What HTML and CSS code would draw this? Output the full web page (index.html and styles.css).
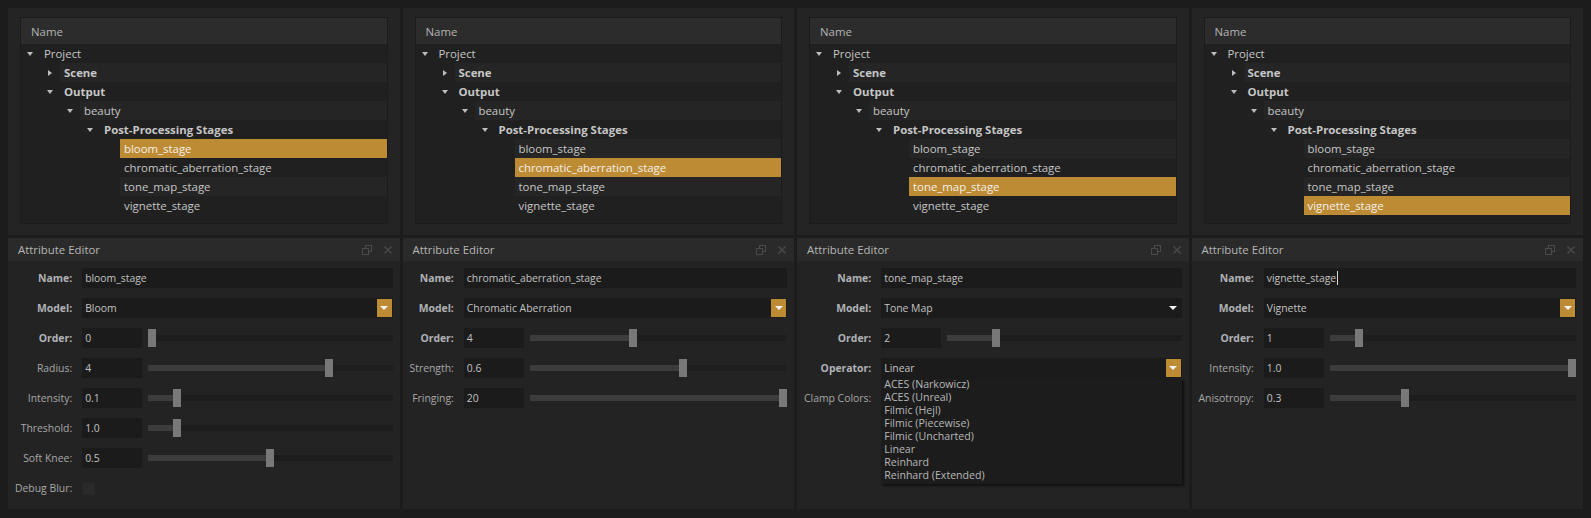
FILE: index.html
```html
<!DOCTYPE html>
<html>
<head>
<meta charset="utf-8">
<link rel="stylesheet" href="styles.css">
</head>
<body>
<div class="app">

  <!-- Column 1 -->
  <div class="col">
    <section class="outliner">
      <div class="tree">
        <div class="tree-head">Name</div>
        <div class="row"><span class="tw l0"><i class="arr down"></i></span><span class="item">Project</span></div>
        <div class="row alt"><span class="tw l1"><i class="arr right"></i></span><span class="item b">Scene</span></div>
        <div class="row"><span class="tw l1"><i class="arr down"></i></span><span class="item b">Output</span></div>
        <div class="row alt"><span class="tw l2"><i class="arr down"></i></span><span class="item">beauty</span></div>
        <div class="row"><span class="tw l3"><i class="arr down"></i></span><span class="item b">Post-Processing Stages</span></div>
        <div class="row"><span class="tw l4"></span><span class="item sel">bloom_stage</span></div>
        <div class="row"><span class="tw l4"></span><span class="item">chromatic_aberration_stage</span></div>
        <div class="row alt"><span class="tw l4"></span><span class="item">tone_map_stage</span></div>
        <div class="row"><span class="tw l4"></span><span class="item">vignette_stage</span></div>
      </div>
    </section>
    <section class="editor">
      <header class="titlebar"><span>Attribute Editor</span><span class="tb-icons"><svg width="10" height="10" viewBox="0 0 10 10"><rect x="3.5" y="0.5" width="6" height="6" fill="none" stroke="#4a4a4a"/><rect x="0.5" y="3.5" width="6" height="6" fill="#2a2a2a" stroke="#4a4a4a"/></svg><svg width="8" height="8" viewBox="0 0 8 8"><path d="M0.5 0.5L7.5 7.5M7.5 0.5L0.5 7.5" stroke="#4a4a4a" stroke-width="1.4"/></svg></span></header>
      <div class="form">
        <span class="lbl b">Name:</span><div class="field">bloom_stage</div>
        <span class="lbl b">Model:</span><div class="field combo">Bloom<span class="dd gold"><i class="tri"></i></span></div>
        <span class="lbl b">Order:</span><div class="spinrow"><div class="field spin">0</div><div class="slider" style="--v:0"><span class="fill"></span><span class="handle"></span></div></div>
        <span class="lbl">Radius:</span><div class="spinrow"><div class="field spin">4</div><div class="slider" style="--v:0.75"><span class="fill"></span><span class="handle"></span></div></div>
        <span class="lbl">Intensity:</span><div class="spinrow"><div class="field spin">0.1</div><div class="slider" style="--v:0.105"><span class="fill"></span><span class="handle"></span></div></div>
        <span class="lbl">Threshold:</span><div class="spinrow"><div class="field spin">1.0</div><div class="slider" style="--v:0.105"><span class="fill"></span><span class="handle"></span></div></div>
        <span class="lbl">Soft Knee:</span><div class="spinrow"><div class="field spin">0.5</div><div class="slider" style="--v:0.5"><span class="fill"></span><span class="handle"></span></div></div>
        <span class="lbl">Debug Blur:</span><div class="checkcell"><span class="check"></span></div>
      </div>
    </section>
  </div>

  <!-- Column 2 -->
  <div class="col">
    <section class="outliner">
      <div class="tree">
        <div class="tree-head">Name</div>
        <div class="row"><span class="tw l0"><i class="arr down"></i></span><span class="item">Project</span></div>
        <div class="row alt"><span class="tw l1"><i class="arr right"></i></span><span class="item b">Scene</span></div>
        <div class="row"><span class="tw l1"><i class="arr down"></i></span><span class="item b">Output</span></div>
        <div class="row alt"><span class="tw l2"><i class="arr down"></i></span><span class="item">beauty</span></div>
        <div class="row"><span class="tw l3"><i class="arr down"></i></span><span class="item b">Post-Processing Stages</span></div>
        <div class="row alt"><span class="tw l4"></span><span class="item">bloom_stage</span></div>
        <div class="row"><span class="tw l4"></span><span class="item sel">chromatic_aberration_stage</span></div>
        <div class="row alt"><span class="tw l4"></span><span class="item">tone_map_stage</span></div>
        <div class="row"><span class="tw l4"></span><span class="item">vignette_stage</span></div>
      </div>
    </section>
    <section class="editor">
      <header class="titlebar"><span>Attribute Editor</span><span class="tb-icons"><svg width="10" height="10" viewBox="0 0 10 10"><rect x="3.5" y="0.5" width="6" height="6" fill="none" stroke="#4a4a4a"/><rect x="0.5" y="3.5" width="6" height="6" fill="#2a2a2a" stroke="#4a4a4a"/></svg><svg width="8" height="8" viewBox="0 0 8 8"><path d="M0.5 0.5L7.5 7.5M7.5 0.5L0.5 7.5" stroke="#4a4a4a" stroke-width="1.4"/></svg></span></header>
      <div class="form">
        <span class="lbl b">Name:</span><div class="field">chromatic_aberration_stage</div>
        <span class="lbl b">Model:</span><div class="field combo">Chromatic Aberration<span class="dd gold"><i class="tri"></i></span></div>
        <span class="lbl b">Order:</span><div class="spinrow"><div class="field spin">4</div><div class="slider" style="--v:0.4"><span class="fill"></span><span class="handle"></span></div></div>
        <span class="lbl">Strength:</span><div class="spinrow"><div class="field spin">0.6</div><div class="slider" style="--v:0.6"><span class="fill"></span><span class="handle"></span></div></div>
        <span class="lbl">Fringing:</span><div class="spinrow"><div class="field spin">20</div><div class="slider" style="--v:1"><span class="fill"></span><span class="handle"></span></div></div>
      </div>
    </section>
  </div>

  <!-- Column 3 -->
  <div class="col">
    <section class="outliner">
      <div class="tree">
        <div class="tree-head">Name</div>
        <div class="row"><span class="tw l0"><i class="arr down"></i></span><span class="item">Project</span></div>
        <div class="row alt"><span class="tw l1"><i class="arr right"></i></span><span class="item b">Scene</span></div>
        <div class="row"><span class="tw l1"><i class="arr down"></i></span><span class="item b">Output</span></div>
        <div class="row alt"><span class="tw l2"><i class="arr down"></i></span><span class="item">beauty</span></div>
        <div class="row"><span class="tw l3"><i class="arr down"></i></span><span class="item b">Post-Processing Stages</span></div>
        <div class="row alt"><span class="tw l4"></span><span class="item">bloom_stage</span></div>
        <div class="row"><span class="tw l4"></span><span class="item">chromatic_aberration_stage</span></div>
        <div class="row"><span class="tw l4"></span><span class="item sel">tone_map_stage</span></div>
        <div class="row"><span class="tw l4"></span><span class="item">vignette_stage</span></div>
      </div>
    </section>
    <section class="editor">
      <header class="titlebar"><span>Attribute Editor</span><span class="tb-icons"><svg width="10" height="10" viewBox="0 0 10 10"><rect x="3.5" y="0.5" width="6" height="6" fill="none" stroke="#4a4a4a"/><rect x="0.5" y="3.5" width="6" height="6" fill="#2a2a2a" stroke="#4a4a4a"/></svg><svg width="8" height="8" viewBox="0 0 8 8"><path d="M0.5 0.5L7.5 7.5M7.5 0.5L0.5 7.5" stroke="#4a4a4a" stroke-width="1.4"/></svg></span></header>
      <div class="form">
        <span class="lbl b">Name:</span><div class="field">tone_map_stage</div>
        <span class="lbl b">Model:</span><div class="field combo">Tone Map<span class="dd"><i class="tri"></i></span></div>
        <span class="lbl b">Order:</span><div class="spinrow"><div class="field spin">2</div><div class="slider" style="--v:0.2"><span class="fill"></span><span class="handle"></span></div></div>
        <span class="lbl b">Operator:</span><div class="field combo open">Linear<span class="dd gold"><i class="tri"></i></span>
          <ul class="popup">
            <li>ACES (Narkowicz)</li>
            <li>ACES (Unreal)</li>
            <li>Filmic (Hejl)</li>
            <li>Filmic (Piecewise)</li>
            <li>Filmic (Uncharted)</li>
            <li>Linear</li>
            <li>Reinhard</li>
            <li>Reinhard (Extended)</li>
          </ul>
        </div>
        <span class="lbl">Clamp Colors:</span><div class="checkcell"><span class="check"></span></div>
      </div>
    </section>
  </div>

  <!-- Column 4 -->
  <div class="col">
    <section class="outliner">
      <div class="tree">
        <div class="tree-head">Name</div>
        <div class="row"><span class="tw l0"><i class="arr down"></i></span><span class="item">Project</span></div>
        <div class="row alt"><span class="tw l1"><i class="arr right"></i></span><span class="item b">Scene</span></div>
        <div class="row"><span class="tw l1"><i class="arr down"></i></span><span class="item b">Output</span></div>
        <div class="row alt"><span class="tw l2"><i class="arr down"></i></span><span class="item">beauty</span></div>
        <div class="row"><span class="tw l3"><i class="arr down"></i></span><span class="item b">Post-Processing Stages</span></div>
        <div class="row alt"><span class="tw l4"></span><span class="item">bloom_stage</span></div>
        <div class="row"><span class="tw l4"></span><span class="item">chromatic_aberration_stage</span></div>
        <div class="row alt"><span class="tw l4"></span><span class="item">tone_map_stage</span></div>
        <div class="row"><span class="tw l4"></span><span class="item sel">vignette_stage</span></div>
      </div>
    </section>
    <section class="editor">
      <header class="titlebar"><span>Attribute Editor</span><span class="tb-icons"><svg width="10" height="10" viewBox="0 0 10 10"><rect x="3.5" y="0.5" width="6" height="6" fill="none" stroke="#4a4a4a"/><rect x="0.5" y="3.5" width="6" height="6" fill="#2a2a2a" stroke="#4a4a4a"/></svg><svg width="8" height="8" viewBox="0 0 8 8"><path d="M0.5 0.5L7.5 7.5M7.5 0.5L0.5 7.5" stroke="#4a4a4a" stroke-width="1.4"/></svg></span></header>
      <div class="form">
        <span class="lbl b">Name:</span><div class="field">vignette_stage<span class="caret"></span></div>
        <span class="lbl b">Model:</span><div class="field combo">Vignette<span class="dd gold"><i class="tri"></i></span></div>
        <span class="lbl b">Order:</span><div class="spinrow"><div class="field spin">1</div><div class="slider" style="--v:0.105"><span class="fill"></span><span class="handle"></span></div></div>
        <span class="lbl">Intensity:</span><div class="spinrow"><div class="field spin">1.0</div><div class="slider" style="--v:1"><span class="fill"></span><span class="handle"></span></div></div>
        <span class="lbl">Anisotropy:</span><div class="spinrow"><div class="field spin">0.3</div><div class="slider" style="--v:0.3"><span class="fill"></span><span class="handle"></span></div></div>
      </div>
    </section>
  </div>

</div>
</body>
</html>
```

FILE: styles.css
```css
* { box-sizing: border-box; }

html, body {
  margin: 0;
  padding: 0;
  background: #1c1c1c;
  font-family: "Open Sans", "Noto Sans", sans-serif;
}

.app {
  display: grid;
  grid-template-columns: repeat(4, 1fr);
  column-gap: 3px;
  padding: 8px 8px 9px 8px;
  height: 518px;
  width: 1591px;
}

.col {
  display: flex;
  flex-direction: column;
  gap: 3px;
  min-width: 0;
}

/* ---------- Outliner ---------- */
.outliner {
  height: 227px;
  background: #242424;
  padding: 9px 12px 0 12px;
}

.tree {
  height: 207px;
  background: #202020;
  border: 1px solid #1b1b1b;
  font-size: 11.4px;
  color: #c6c6c6;
}

.tree-head {
  height: 26px;
  background: #2c2c2c;
  display: flex;
  align-items: center;
  padding-left: 10px;
  color: #b4b4b4;
}

.row {
  display: flex;
  height: 19px;
}

.tw {
  flex: none;
  display: flex;
  align-items: center;
  justify-content: center;
  width: 20px;
}
.tw.l0 { margin-left: -1px; }
.tw.l1 { margin-left: 19px; }
.tw.l2 { margin-left: 39px; }
.tw.l3 { margin-left: 59px; }
.tw.l4 { margin-left: 79px; }

.arr {
  display: block;
  width: 0;
  height: 0;
}
.arr.down {
  border-left: 3.5px solid transparent;
  border-right: 3.5px solid transparent;
  border-top: 4px solid #bdbdbd;
}
.arr.right {
  border-top: 3.5px solid transparent;
  border-bottom: 3.5px solid transparent;
  border-left: 4px solid #bdbdbd;
}

.item {
  flex: 1;
  display: flex;
  align-items: center;
  padding-left: 4px;
  white-space: nowrap;
}
.row.alt .item { background: #252525; }
.item.b { font-weight: bold; }
.row .item.sel {
  background: #bd8b34;
  color: #f4f1ea;
}

/* ---------- Attribute editor ---------- */
.editor {
  flex: 1;
  background: #232323;
  display: flex;
  flex-direction: column;
}

.titlebar {
  height: 23px;
  flex: none;
  background: #2a2a2a;
  display: flex;
  align-items: center;
  justify-content: space-between;
  padding: 0 8px 0 10px;
  font-size: 11.4px;
  color: #b6b6b6;
}

.tb-icons {
  display: flex;
  align-items: center;
  gap: 12px;
}
.tb-icons svg { display: block; }

.form {
  display: grid;
  grid-template-columns: auto 1fr;
  grid-auto-rows: 20px;
  column-gap: 10px;
  row-gap: 10px;
  padding: 7px 7px 0 7px;
  font-size: 10.4px;
}

.lbl {
  align-self: center;
  text-align: right;
  color: #a8a8a8;
  white-space: nowrap;
}
.lbl.b {
  font-weight: bold;
  color: #b0b2b6;
}

.field {
  background: #1b1b1b;
  display: flex;
  align-items: center;
  padding-left: 3px;
  color: #c2c2c2;
  white-space: nowrap;
  min-width: 0;
}

.caret {
  display: inline-block;
  width: 1px;
  height: 14px;
  background: #d8d8d8;
  margin-left: 1px;
}

.combo {
  position: relative;
  justify-content: space-between;
  padding-right: 1px;
}

.dd {
  width: 15px;
  height: 18px;
  display: flex;
  align-items: center;
  justify-content: center;
}
.dd.gold { background: #bd8b34; }
.tri {
  display: block;
  width: 0;
  height: 0;
  border-left: 4px solid transparent;
  border-right: 4px solid transparent;
  border-top: 4px solid #f2f2f2;
}

.popup {
  position: absolute;
  top: 100%;
  left: 0;
  right: 0;
  margin: 0;
  padding: 0 0 2px 0;
  list-style: none;
  background: #1c1c1c;
  box-shadow: 2px 2px 2px rgba(0, 0, 0, 0.55);
  z-index: 5;
}
.popup li {
  height: 13px;
  line-height: 13px;
  padding-left: 3px;
  color: #b8b8b8;
  font-size: 10.6px;
}

.spinrow {
  display: flex;
  gap: 6px;
  min-width: 0;
}
.spin {
  flex: none;
  width: 60px;
}

.slider {
  flex: 1;
  position: relative;
}
.slider::before {
  content: "";
  position: absolute;
  left: 0;
  right: 0;
  top: 7px;
  height: 6px;
  background: #1d1d1d;
}
.slider .fill {
  position: absolute;
  left: 0;
  top: 7px;
  height: 6px;
  width: calc(var(--v) * (100% - 8px) + 4px);
  background: #3c3c3c;
}
.slider .handle {
  position: absolute;
  top: 1px;
  width: 8px;
  height: 18px;
  left: calc(var(--v) * (100% - 8px));
  background: #787878;
}

.checkcell {
  display: flex;
  align-items: center;
}
.check {
  display: block;
  width: 13px;
  height: 13px;
  background: #2a2a2a;
  border: 1px solid #262626;
}
```
